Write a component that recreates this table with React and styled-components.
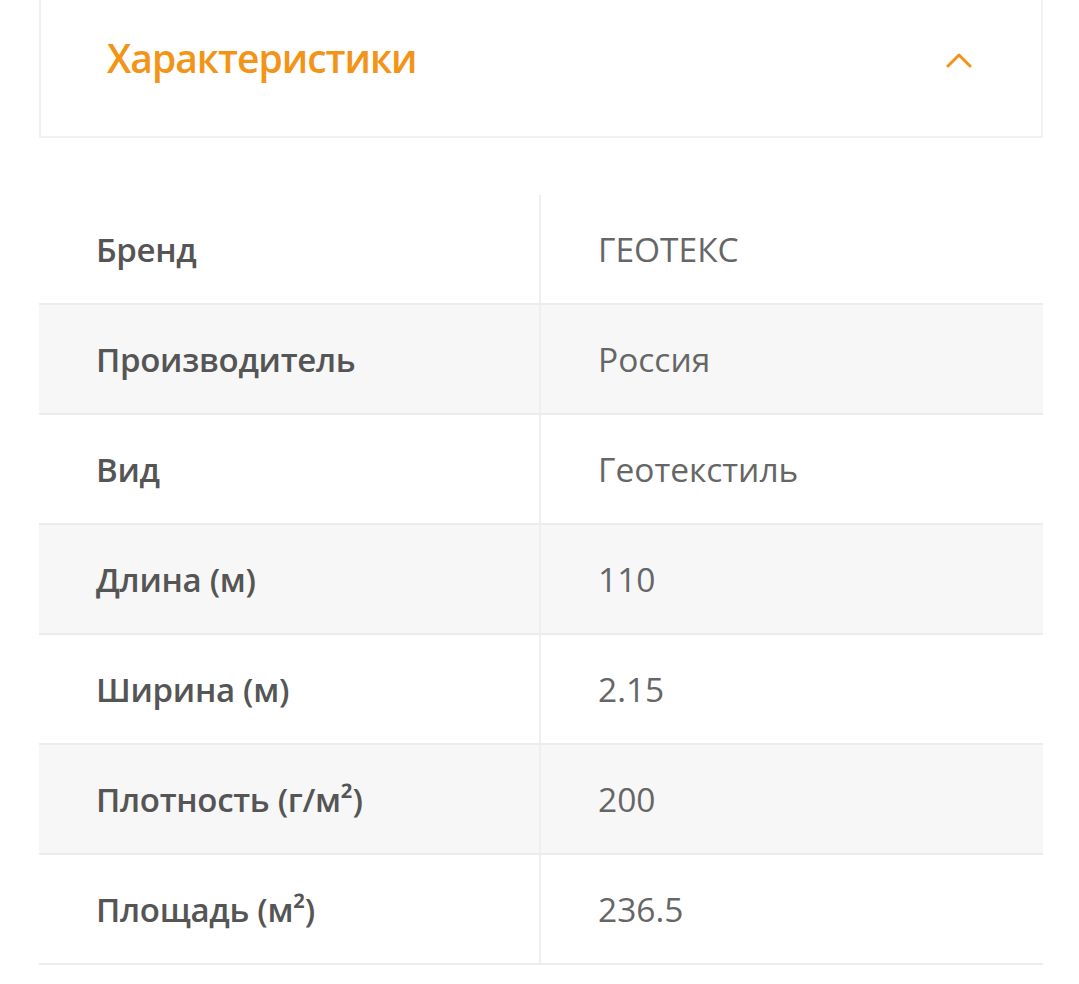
import React from "react"
import styled, { createGlobalStyle } from "styled-components"

const GlobalStyle = createGlobalStyle`
  body {
    margin: 0;
    background: #fff;
    font-family: "Open Sans", "Noto Sans", sans-serif;
  }
`

const Page = styled.div`
  padding: 0 36px 0 39px;
  width: 1004px;
`

const Header = styled.div`
  display: flex;
  align-items: center;
  justify-content: space-between;
  height: 54px;
  padding: 31px 69px 51px 66px;
  border: 2px solid #f1f1f1;
  border-top: none;
`

const Title = styled.h2`
  margin: 0;
  font-size: 39px;
  font-weight: 600;
  line-height: 54px;
  color: #f39417;
  letter-spacing: -1px;
`

const Chevron = styled.svg`
  width: 26px;
  height: 16px;
  margin-top: 4px;
`

const Table = styled.div`
  margin-top: 57px;
`

const Row = styled.div`
  display: grid;
  grid-template-columns: 502px 1fr;
  height: 108px;
  border-bottom: 2px solid #ececec;
  background: ${(p) => (p.$alt ? "#f7f7f7" : "#fff")};
`

const Cell = styled.div`
  display: flex;
  align-items: center;
  padding-left: 57px;
  font-size: ${(p) => (p.$label ? "33px" : "33.5px")};
  letter-spacing: ${(p) => (p.$label ? "-0.3px" : "0")};
  font-weight: ${(p) => (p.$label ? 600 : 400)};
  color: ${(p) => (p.$label ? "#555" : "#666")};
  border-right: ${(p) => (p.$label ? "2px solid #efefef" : "none")};
`

const specs = [
  ["Бренд", "ГЕОТЕКС"],
  ["Производитель", "Россия"],
  ["Вид", "Геотекстиль"],
  ["Длина (м)", "110"],
  ["Ширина (м)", "2.15"],
  ["Плотность (г/м²)", "200"],
  ["Площадь (м²)", "236.5"],
]

export default function App() {
  return (
    <>
      <GlobalStyle />
      <Page>
        <Header>
          <Title>Характеристики</Title>
          <Chevron viewBox="0 0 26 16">
            <path
              d="M2 14 L13 3 L24 14"
              fill="none"
              stroke="#f39417"
              strokeWidth="3"
              strokeLinecap="round"
              strokeLinejoin="round"
            />
          </Chevron>
        </Header>
        <Table>
          {specs.map(([label, value], i) => (
            <Row key={label} $alt={i % 2 === 1}>
              <Cell $label>{label}</Cell>
              <Cell>{value}</Cell>
            </Row>
          ))}
        </Table>
      </Page>
    </>
  )
}
